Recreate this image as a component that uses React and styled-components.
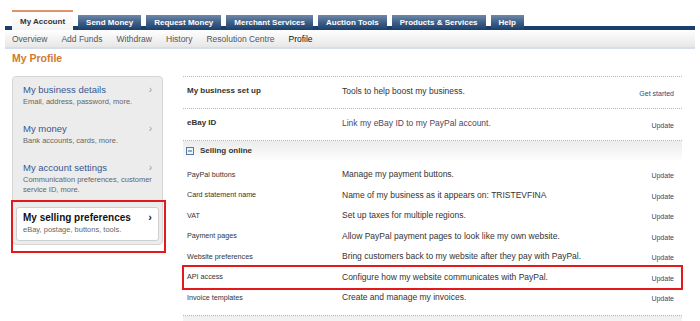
import React from 'react';
import styled, { createGlobalStyle } from 'styled-components';

const GlobalStyle = createGlobalStyle`
  * {
    box-sizing: border-box;
  }
  body {
    margin: 0;
    background: #fff;
    color: #333;
    font-family: "Liberation Sans", Arial, sans-serif;
  }
`;

const Page = styled.div`
  width: 700px;
  padding: 10px 5px 0;
`;

const TabBar = styled.div`
  display: flex;
  align-items: flex-end;
  gap: 5px;
  width: 690px;
  height: 20px;
  padding-left: 7px;
  background: linear-gradient(to bottom, transparent 16px, #1b3f6d 16px);
`;

const Tab = styled.div`
  display: flex;
  align-items: center;
  height: ${(p) => (p.$active ? '20px' : '15px')};
  padding: 0 8px;
  font-size: 8px;
  font-weight: bold;
  white-space: nowrap;
  color: ${(p) => (p.$active ? '#333' : '#fff')};
  background: ${(p) =>
    p.$active
      ? 'linear-gradient(#ffffff, #f3f3f3)'
      : 'linear-gradient(#6f88a9, #3a5b83 55%, #1b3f6d)'};
  border-top: ${(p) => (p.$active ? '2px solid #e0926a' : 'none')};
`;

const SubNav = styled.div`
  display: flex;
  align-items: center;
  gap: 14px;
  width: 690px;
  height: 19px;
  padding-left: 7px;
  background: linear-gradient(#ffffff, #e7e7e7);
  border-bottom: 2px solid #d6deeb;
`;

const SubLink = styled.span`
  font-size: 8.5px;
  color: ${(p) => (p.$current ? '#111' : '#555')};
`;

const Main = styled.div`
  padding: 0 7px;
`;

const Title = styled.h1`
  margin: 3px 0 12px;
  font-size: 10.5px;
  line-height: 12px;
  font-weight: bold;
  color: #d07a2e;
`;

const Body = styled.div`
  display: flex;
  align-items: flex-start;
  gap: 20px;
`;

const Sidebar = styled.div`
  width: 151px;
  padding-bottom: 3px;
  background: #ececec;
  border: 1px solid #d6d6d6;
  border-radius: 4px;
`;

const SideItem = styled.div`
  position: relative;
  padding: ${(p) => (p.$selected ? '3px 6px 5px' : '6px 10px 9px')};
  margin: ${(p) => (p.$selected ? '3px 3px 0' : '0')};
  background: ${(p) => (p.$selected ? '#fff' : 'transparent')};
  border: ${(p) => (p.$selected ? '1px solid #cfcfcf' : 'none')};
  border-radius: 3px;
`;

const SideHead = styled.div`
  display: flex;
  justify-content: space-between;
  align-items: center;
  height: 12px;
  font-size: ${(p) => (p.$selected ? '10px' : '9.5px')};
  font-weight: ${(p) => (p.$selected ? 'bold' : 'normal')};
  color: ${(p) => (p.$selected ? '#111' : '#36578f')};
`;

const Chevron = styled.span`
  font-size: ${(p) => (p.$selected ? '11px' : '10px')};
  font-weight: ${(p) => (p.$selected ? 'bold' : 'normal')};
  color: ${(p) => (p.$selected ? '#222' : '#999')};
`;

const SideSub = styled.div`
  margin-top: 2px;
  font-size: 7.5px;
  line-height: 10px;
  color: #666;
`;

const Annotation = styled.span`
  position: absolute;
  top: ${(p) => p.$top}px;
  bottom: ${(p) => p.$bottom}px;
  left: ${(p) => p.$left}px;
  right: ${(p) => p.$right}px;
  border: 2px solid #e3191c;
  pointer-events: none;
`;

const Content = styled.div`
  width: 499px;
`;

const TopRow = styled.div`
  display: grid;
  grid-template-columns: 155px 1fr auto;
  height: 32px;
  padding: 9px 8px 0 4px;
  border-top: 1px dotted #b5b5b5;
  line-height: 10px;
`;

const RowLabel = styled.div`
  font-size: ${(p) => (p.$bold ? '8px' : '7.2px')};
  font-weight: ${(p) => (p.$bold ? 'bold' : 'normal')};
  color: #333;
`;

const RowText = styled.div`
  font-size: 8.5px;
  color: ${(p) => p.$tone || '#333'};
`;

const RowAction = styled.a`
  padding-top: 3px;
  font-size: 7px;
  color: #2b4b7a;
  text-align: right;
  text-decoration: none;
`;

const SectionHead = styled.div`
  display: flex;
  align-items: center;
  gap: 6px;
  height: 20px;
  padding-left: 3px;
  border-top: 1px dotted #b5b5b5;
  background: linear-gradient(#ececec, #fdfdfd);
  font-size: 8px;
  font-weight: bold;
  color: #333;
`;

const RowList = styled.div`
  padding: 4px 0 7px;
`;

const SubRow = styled.div`
  position: relative;
  display: grid;
  grid-template-columns: 155px 1fr auto;
  align-items: center;
  height: 20.5px;
  padding: 0 8px 0 4px;
`;

const NextSection = styled.div`
  height: 10px;
  border-top: 1px dotted #b5b5b5;
  background: linear-gradient(#eeeeee, #f8f8f8);
`;

const tabs = [
  'My Account',
  'Send Money',
  'Request Money',
  'Merchant Services',
  'Auction Tools',
  'Products & Services',
  'Help',
];

const subLinks = ['Overview', 'Add Funds', 'Withdraw', 'History', 'Resolution Centre', 'Profile'];

const sideItems = [
  { title: 'My business details', sub: ['Email, address, password, more.'] },
  { title: 'My money', sub: ['Bank accounts, cards, more.'] },
  { title: 'My account settings', sub: ['Communication preferences, customer', 'service ID, more.'] },
];

const sellingRows = [
  ['PayPal buttons', 'Manage my payment buttons.'],
  ['Card statement name', 'Name of my business as it appears on: TRISTEVFINA'],
  ['VAT', 'Set up taxes for multiple regions.'],
  ['Payment pages', 'Allow PayPal payment pages to look like my own website.'],
  ['Website preferences', 'Bring customers back to my website after they pay with PayPal.'],
  ['API access', 'Configure how my website communicates with PayPal.'],
  ['Invoice templates', 'Create and manage my invoices.'],
];

function MinusBox() {
  return (
    <svg width="8" height="8" viewBox="0 0 8 8">
      <rect x="0.5" y="0.5" width="7" height="7" fill="#eef2f8" stroke="#5a78a3" />
      <line x1="2" y1="4" x2="6" y2="4" stroke="#3d5f8f" strokeWidth="1" />
    </svg>
  );
}

export default function App() {
  return (
    <>
      <GlobalStyle />
      <Page>
        <TabBar>
          {tabs.map((t, i) => (
            <Tab key={t} $active={i === 0}>
              {t}
            </Tab>
          ))}
        </TabBar>
        <SubNav>
          {subLinks.map((l) => (
            <SubLink key={l} $current={l === 'Profile'}>
              {l}
            </SubLink>
          ))}
        </SubNav>
        <Main>
          <Title>My Profile</Title>
          <Body>
            <Sidebar>
              {sideItems.map((item) => (
                <SideItem key={item.title}>
                  <SideHead>
                    {item.title}
                    <Chevron>›</Chevron>
                  </SideHead>
                  <SideSub>
                    {item.sub.map((s) => (
                      <div key={s}>{s}</div>
                    ))}
                  </SideSub>
                </SideItem>
              ))}
              <SideItem $selected>
                <SideHead $selected>
                  My selling preferences
                  <Chevron $selected>›</Chevron>
                </SideHead>
                <SideSub>eBay, postage, buttons, tools.</SideSub>
                <Annotation $top={-8} $bottom={-13} $left={-6} $right={-8} />
              </SideItem>
            </Sidebar>
            <Content>
              <TopRow>
                <RowLabel $bold>My business set up</RowLabel>
                <RowText>Tools to help boost my business.</RowText>
                <RowAction>Get started</RowAction>
              </TopRow>
              <TopRow>
                <RowLabel $bold>eBay ID</RowLabel>
                <RowText $tone="#4a4760">Link my eBay ID to my PayPal account.</RowText>
                <RowAction>Update</RowAction>
              </TopRow>
              <SectionHead>
                <MinusBox />
                Selling online
              </SectionHead>
              <RowList>
                {sellingRows.map(([label, text]) => (
                  <SubRow key={label}>
                    <RowLabel>{label}</RowLabel>
                    <RowText>{text}</RowText>
                    <RowAction>Update</RowAction>
                    {label === 'API access' && (
                      <Annotation $top={-2} $bottom={-3} $left={-1} $right={-1} />
                    )}
                  </SubRow>
                ))}
              </RowList>
              <NextSection />
            </Content>
          </Body>
        </Main>
      </Page>
    </>
  );
}
